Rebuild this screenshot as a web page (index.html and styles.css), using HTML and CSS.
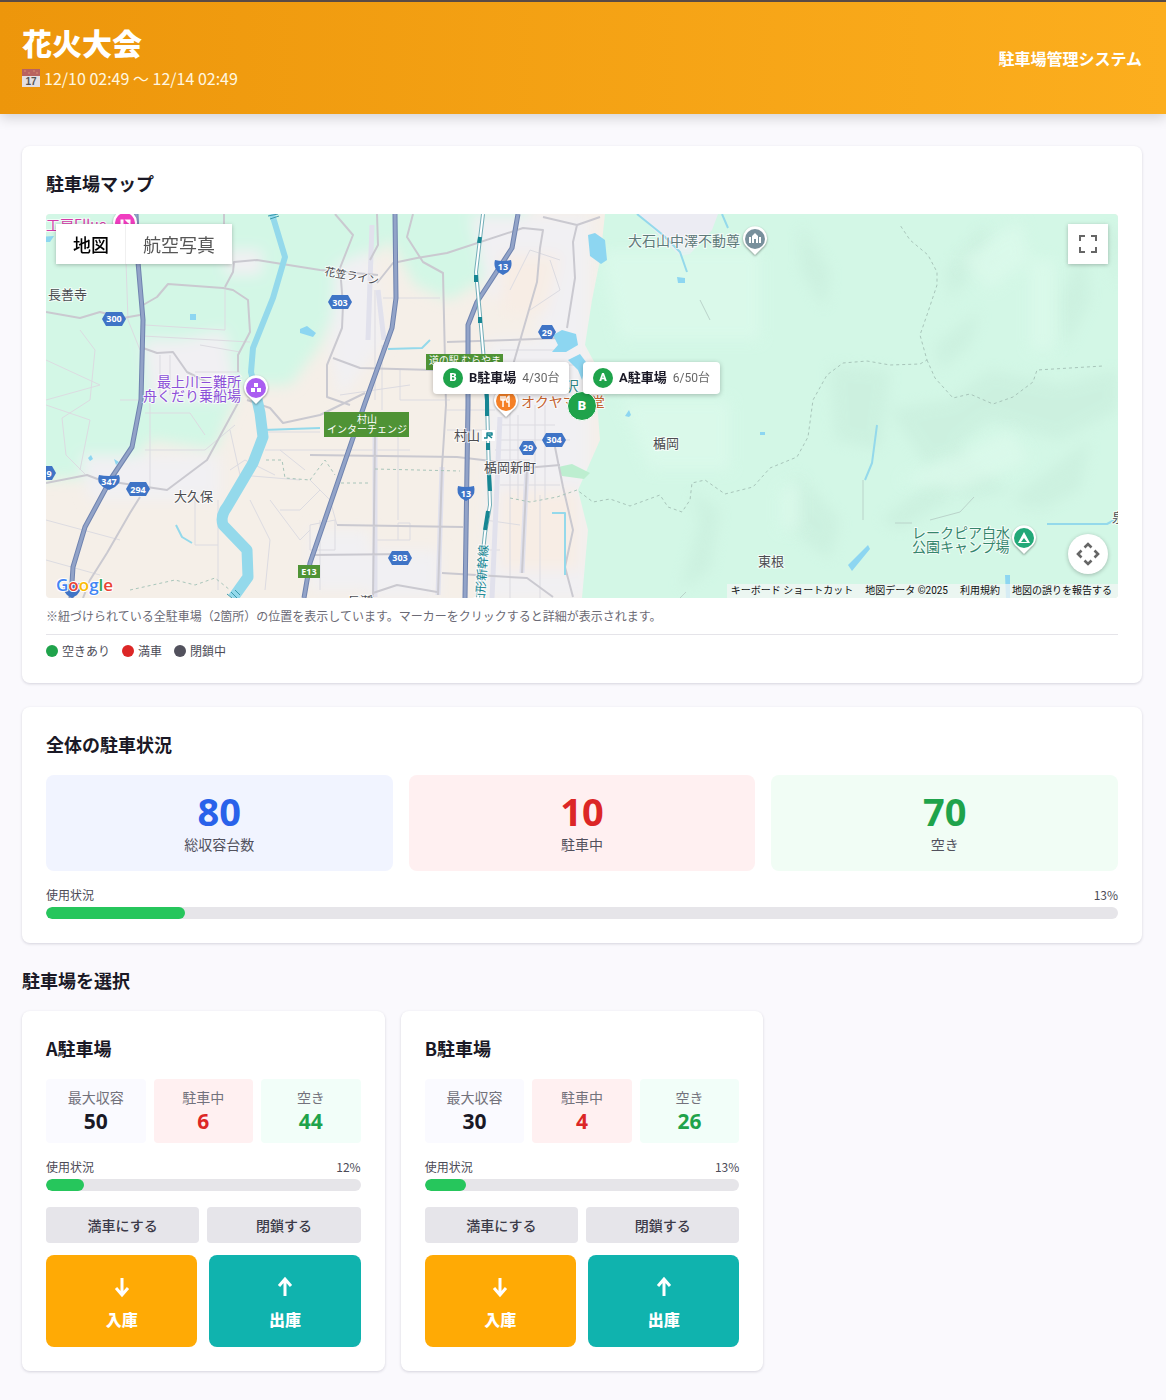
FILE: index.html
```html
<!DOCTYPE html>
<html lang="ja">
<head>
<meta charset="utf-8">
<meta name="viewport" content="width=device-width, initial-scale=1">
<title>花火大会 - 駐車場管理システム</title>
<link rel="stylesheet" href="styles.css">
</head>
<body>
<header class="site-header">
  <div>
    <h1 class="event-title">花火大会</h1>
    <p class="event-period">
      <svg class="calendar-icon" viewBox="0 0 18 18" aria-hidden="true">
        <rect width="18" height="18" fill="#e4dfe2"/><rect width="18" height="7" fill="#b9625f"/>
        <path d="M2 2h2M6 4h2M11 2h2M14 4h2" stroke="#d58f70" stroke-width="1"/>
        <text x="9" y="16" text-anchor="middle" class="calendar-day">17</text>
      </svg>
      <span>12/10 02:49 〜 12/14 02:49</span>
    </p>
  </div>
  <p class="system-name">駐車場管理システム</p>
</header>

<main class="page">
  <section class="card">
    <h2 class="heading">駐車場マップ</h2>
    <div class="map">
      <svg class="map-canvas" viewBox="46 214 1072 384" preserveAspectRatio="xMidYMid slice" role="img" aria-label="駐車場周辺の地図">
        <defs>
          <filter id="soft" x="-20%" y="-20%" width="140%" height="140%"><feGaussianBlur stdDeviation="7"/></filter>
          <path id="pref" d="M-12 0L-8-7H8L12 0L8 7H-8Z"/>
          <path id="natl" d="M-8-7Q0-5 8-7Q10 0 5 5L0 8L-5 5Q-10 0-8-7Z"/>
          <path id="pin" d="M0 16L-7 9A12 12 0 1 1 7 9Z"/>
        </defs>
        <rect x="46" y="214" width="1072" height="384" fill="#f5efe8"/>
        <g filter="url(#soft)">
          <path fill="#d3f7e6" d="M20 190H535L505 265L450 300L415 285L390 240L350 275L320 345L290 385H240L215 450L150 440L130 470L95 478L20 480Z"/>
          <path fill="#f1f0f3" d="M143 340H180L225 330L235 380L225 400H150ZM225 250H262V275H225ZM470 215H590V340H540L530 290L490 300ZM488 340H590V600H485ZM335 265L370 250L385 340L340 400L330 350ZM80 455H220V500H90ZM310 530H370V590H310ZM370 550H440V598H370Z"/>
          <path fill="#f7ede5" d="M500 255H560L545 315H500ZM500 490H580V570H500Z"/>
        </g>
        <path fill="#d3f7e6" d="M605 214H1118V598H582L588 530L578 490L600 440L597 402L605 382L585 345L592 300L600 260Z"/>
        <path fill="#ececf3" d="M638 214H718L712 230L690 254L680 256L662 238Z"/>
        <path fill="#bdeed0" d="M558 467L572 464L590 473L584 479L562 476Z"/>
        <g filter="url(#soft)" fill="#c3e8d7" opacity=".4">
          <path d="M945 270L985 225L990 250L950 300ZM935 345L980 310L970 345L940 370ZM1060 300L1085 240L1090 300L1065 350ZM1100 230H1118V290ZM830 365L890 370L880 450L835 440ZM680 590L700 520L690 490L720 510L710 570ZM795 470L840 520L830 560L790 530ZM890 410L950 400L990 370L1060 385L1118 370V410L1060 440L990 420L930 470ZM880 520L960 460L950 500L900 530ZM800 225L830 270L825 310L800 270ZM1010 500L1090 440L1080 490L1040 510ZM930 400L970 460L1010 490L960 500Z"/>
        </g>
        <g filter="url(#soft)" fill="#ddfaec" opacity=".7">
          <path d="M960 260L1020 220L1030 260L990 290ZM600 250H760V340H620ZM1030 260H1055V350H1030ZM900 480L1010 430L1030 460L960 490ZM780 490L800 480V530H780ZM620 400H730V470H650Z"/>
        </g>

        <g class="lane">
          <path d="M126 262L128 320L140 350M46 360L100 385L46 400M46 405L90 420L80 470M80 330L95 350L90 400L62 418L66 455L85 474M46 520L120 540M46 560L100 575M145 450H205L235 425M145 413H190L205 435M145 325L225 330V290M143 336L250 342M160 355V395M170 355V395M195 372H240M200 345L240 352M230 430L240 475L300 480M265 432H320M265 450H410M320 520V590M335 520V550H310V525ZM310 480L330 500L337 525M398 430V520M375 540H410V523H398V540M383 298H440M375 290V400M382 345V410M340 395L410 385M400 370V400H450M447 410H495M447 430H490M500 350H560M500 365H585M500 425H555M500 440H570M500 485H560M510 400V600M518 415V500M535 405V500M545 405V500M495 450H530M498 460H530M540 495V600M480 550H500M485 520L520 525M510 290L530 250L560 260M530 310L560 290L550 260M230 470L245 460L275 475M280 450L305 470M270 500L300 540L310 530M195 500V545H218M218 500V590M120 400H140M150 390V490M250 500L270 540L265 590M280 510H300L320 490"/>
        </g>
        <g class="road-case"><path d="M375 437V597M442 467L438 595M527 467L522 573M500 417L492 598M378 290L384 340M372 225L368 340"/></g>
        <g class="road">
          <path d="M46 312L80 318L100 312L123 318L140 315M143 305L157 297L168 284L223 288L233 290L248 300L250 332L238 355V372M143 348L157 353L173 352L187 372L207 382M225 287L233 272L234 262L257 260L320 270L378 275M46 483L87 475L100 480L167 490L207 460L238 403M140 497L130 513L107 553L90 580L83 598M247 400L270 408L283 423L320 415L365 393"/>
          <path d="M335 214L353 235L340 268L343 305L342 328L327 365V397L350 405M377 283L393 263L417 258L447 253L523 228L543 230L540 248L537 282L513 365M413 214L407 237L423 262L443 273L446 405L442 467L438 595M543 217L577 225L600 217M577 225L573 242L575 278L567 328M447 342L510 340L560 338M333 358L360 368L433 370L495 368"/>
          <path d="M375 437L373 597M310 455L457 457L500 462M337 525L463 527M373 593L397 585L437 592M442 573L527 578L553 597M555 447L563 487L573 530L565 567L573 597M527 467L522 573M310 555L410 554M560 465L525 468M377 214L378 245L370 260M224 214V260"/>
        </g>
        <g class="water">
          <path d="M637 214L663 235L680 252L687 272M722 214L728 228M877 425L872 463L865 480M1047 524L1107 524L1118 518M552 513H565V575M388 349L422 348L430 340M176 525L182 537L192 543M263 430L320 428"/>
          <path class="river-thin" d="M272 214L285 257L273 298L253 348L251 372L258 400"/>
          <path class="river" d="M256 395L260 413L263 437L253 463L227 507Q220 516 223 525L247 550L248 577L233 598"/>
          <path class="pond" d="M588 235L595 233L605 240L607 260L601 264L590 256ZM553 335L562 330L576 334L578 345L566 352H552L558 345ZM568 360L580 354L586 362L582 380L578 370ZM300 329L307 326L316 333L313 337L300 333ZM677 277L685 278V283H678ZM190 314H196V320H190ZM848 565L868 545L870 549L852 571ZM1005 575H1010V598H1006ZM625 416L629 410L631 415L629 417ZM760 432H765V435H760ZM35 237L54 236L50 242H36ZM114 459L119 462L116 465ZM88 458L91 455L93 459L90 461Z"/>
        </g>
        <g class="border">
          <path d="M510 498L530 502L557 497L577 490L593 502L610 499L630 506L660 495L668 507L682 512L690 500L692 483L705 480L725 494L753 487L770 468L797 457L808 437L813 400L827 375L843 363L867 361L890 365L920 364L927 360L920 335L928 312L937 285V272L928 255L910 240L900 225M927 360L935 378L953 398L970 394L993 404L1013 397L1033 382L1037 370L1103 366M130 590L175 580L195 585L215 578L230 590M375 469L460 471M310 480L325 460L335 475M335 483H370M266 460H282L285 478L310 480"/>
        </g>
        <g class="lane dim"><path d="M700 300L710 320M680 598L686 592M863 480V520M930 520L960 512L974 497M895 523H912"/></g>

        <path class="hwy-case" d="M136 214L138 262L143 320L141 400L132 447L112 477L85 527L73 567L71 598M395 214L396 298L392 328L365 403L310 563L304 598M518 214L512 248L477 302L468 325V405L465 598"/>
        <path class="hwy" d="M136 214L138 262L143 320L141 400L132 447L112 477L85 527L73 567L71 598M395 214L396 298L392 328L365 403L310 563L304 598M518 214L512 248L477 302L468 325V405L465 598"/>
        <path class="rail-case" d="M483 214L476 272L480 315L485 372L487 400L489 477L490 505L485 533L478 598"/>
        <path class="rail-bed" d="M483 214L476 272L480 315L485 372L487 400L489 477L490 505L485 533L478 598"/>
        <path class="rail" d="M480 237L479 243M476 275V282M480 317V323"/>
        <path class="rail" d="M485 372L487 400L487 416M488 443V450M489 473L490 491M488 511L485 530"/>
        <path d="M268 216L278 214M270 219L279 216M227 594L232 598M231 592L237 598M235 590L240 595" stroke="#3a9aac" stroke-width="1"/>

        <g fill="#3f74c6">
          <use href="#pref" x="114" y="319"/><use href="#pref" x="340" y="302"/><use href="#pref" x="554" y="440"/><use href="#pref" x="138" y="489"/><use href="#pref" x="400" y="558"/><use href="#pref" x="44" y="473"/>
          <path d="M538 332L542 325H552L556 332L552 339H542ZM519 448L523 441H533L537 448L533 455H523Z"/>
          <use href="#natl" x="503" y="267"/><use href="#natl" x="466" y="493"/><use href="#natl" x="72" y="590"/>
          <path d="M99 475Q109 477 119 475Q122 482 115 487L109 490L103 487Q96 482 99 475Z"/>
        </g>
        <g class="route">
          <text x="114" y="322">300</text><text x="340" y="306">303</text><text x="547" y="336">29</text><text x="554" y="443">304</text><text x="528" y="451">29</text><text x="138" y="493">294</text><text x="400" y="561">303</text><text x="49" y="477">9</text><text x="503" y="270">13</text><text x="466" y="497">13</text><text x="109" y="485">347</text>
        </g>
        <g fill="#4f9335"><path d="M426 354H503V370H426ZM324 412H409V437H324ZM298 565H320V578H298Z"/></g>
        <g class="route"><text x="309" y="575">E13</text></g>
        <g class="sign"><text x="465" y="364">道の駅 むらやま</text><text x="367" y="423">村山</text><text x="367" y="433">インターチェンジ</text></g>

        <g class="place">
          <text x="48" y="299">長善寺</text><text x="174" y="501">大久保</text><text x="653" y="448">楯岡</text><text x="758" y="566">東根</text><text x="484" y="472">楯岡新町</text><text x="454" y="440">村山</text><text x="347" y="606">長瀞</text><text x="1112" y="522">泉</text>
          <text class="road-name" transform="translate(324 275) rotate(10)">花笠ライン</text>
        </g>
        <rect x="482" y="430" width="13" height="11" fill="#fff"/>
        <path d="M484 438H487V433H492V435H488L492 438" fill="none" stroke="#178693" stroke-width="1.5"/>
        <g class="poi">
          <text x="46" y="230" fill="#d439a8">工房Ellue</text>
          <text x="628" y="246" fill="#5f7a7a">大石山中澤不動尊</text>
          <text x="157" y="387" fill="#8b4fd8">最上川三難所</text><text x="143" y="401" fill="#8b4fd8">舟くだり乗船場</text>
          <text x="521" y="407" fill="#c4612d">オクヤマ食堂</text>
          <text x="565" y="391" fill="#2f8585">沢</text>
          <text x="912" y="538" fill="#35856c">レークピア白水</text><text x="912" y="552" fill="#35856c">公園キャンプ場</text>
          <text class="rail-name" transform="translate(484 605) rotate(-86)">山形新幹線</text>
        </g>
        <g fill="#fff" class="pins"><use href="#pin" x="125" y="223"/><use href="#pin" x="755" y="239"/><use href="#pin" x="256" y="388"/><use href="#pin" x="506" y="401"/><use href="#pin" x="1024" y="538"/></g>
        <circle cx="125" cy="223" r="10" fill="#f03dc0"/><path d="M120 219H131V229H120ZM124 219V224H129" fill="#fff" stroke="#f03dc0"/>
        <circle cx="755" cy="239" r="10" fill="#78909c"/><path d="M749 243V237H751V243M752 243V236L755 233L758 236V243H756V239H754V243ZM759 243V237H761V243Z" fill="#fff"/>
        <circle cx="256" cy="388" r="10" fill="#aa5df1"/><path d="M254 383H258V387H254ZM251 388H255V392H251ZM257 388H261V392H257Z" fill="#fff"/>
        <circle cx="506" cy="401" r="10" fill="#f58026"/><path d="M501 396V400H505V396M503 396V407M509 407V396Q506 398 507 402H509" fill="none" stroke="#fff" stroke-width="1.5"/>
        <circle cx="1024" cy="538" r="10" fill="#23a878"/><path d="M1024 532L1030 543H1018Z" fill="#fff"/><path d="M1024 538L1027 542H1021Z" fill="#23a878"/>
      </svg>

      <div class="map-types">
        <button type="button" class="map-type is-active">地図</button>
        <button type="button" class="map-type">航空写真</button>
      </div>
      <button type="button" class="map-button fullscreen" aria-label="全画面表示">
        <svg width="18" height="18" viewBox="0 0 18 18"><path d="M1 6V1H6M12 1H17V6M17 12V17H12M6 17H1V12" fill="none" stroke="#666" stroke-width="2"/></svg>
      </button>
      <button type="button" class="map-button camera" aria-label="地図のカメラ コントロール">
        <svg width="24" height="24" viewBox="0 0 24 24"><path d="M8.500 5.500L12 2L15.500 5.500M18.500 8.500L22 12L18.500 15.500M15.500 18.500L12 22L8.500 18.500M5.500 15.500L2 12L5.500 8.500" fill="none" stroke="#666" stroke-width="2.600"/></svg>
      </button>

      <span class="lot-pin">B</span>
      <button type="button" class="lot-label lot-label-b"><span class="lot-badge">B</span><b>B駐車場</b><span class="lot-count">4/30台</span></button>
      <button type="button" class="lot-label lot-label-a"><span class="lot-badge">A</span><b>A駐車場</b><span class="lot-count">6/50台</span></button>

      <a class="map-logo" href="#" aria-label="Google"><svg width="68" height="24" viewBox="0 0 68 24"><text x="2" y="17" class="logo-text"><tspan fill="#4285f4">G</tspan><tspan fill="#ea4335">o</tspan><tspan fill="#fbbc04">o</tspan><tspan fill="#4285f4">g</tspan><tspan fill="#34a853">l</tspan><tspan fill="#ea4335">e</tspan></text></svg></a>
      <div class="map-credits"><button type="button">キーボード ショートカット</button><span>地図データ ©2025</span><a href="#">利用規約</a><a href="#">地図の誤りを報告する</a></div>
    </div>
    <p class="map-note">※紐づけられている全駐車場（2箇所）の位置を表示しています。マーカーをクリックすると詳細が表示されます。</p>
    <ul class="legend">
      <li><span class="dot dot-open"></span>空きあり</li>
      <li><span class="dot dot-full"></span>満車</li>
      <li><span class="dot dot-closed"></span>閉鎖中</li>
    </ul>
  </section>

  <section class="card">
    <h2 class="heading">全体の駐車状況</h2>
    <div class="totals">
      <div class="total total-blue"><strong>80</strong><span>総収容台数</span></div>
      <div class="total total-red"><strong>10</strong><span>駐車中</span></div>
      <div class="total total-green"><strong>70</strong><span>空き</span></div>
    </div>
    <div class="usage"><span>使用状況</span><span>13%</span></div>
    <div class="bar" role="progressbar" aria-label="使用状況" aria-valuenow="13"><div class="bar-fill" style="width:13%"></div></div>
  </section>

  <section>
    <h2 class="heading">駐車場を選択</h2>
    <div class="lots">
      <article class="card">
        <h3 class="heading">A駐車場</h3>
        <div class="stats">
          <div class="stat"><span>最大収容</span><strong>50</strong></div>
          <div class="stat stat-red"><span>駐車中</span><strong>6</strong></div>
          <div class="stat stat-green"><span>空き</span><strong>44</strong></div>
        </div>
        <div class="usage"><span>使用状況</span><span>12%</span></div>
        <div class="bar" role="progressbar" aria-label="A駐車場の使用状況" aria-valuenow="12"><div class="bar-fill" style="width:12%"></div></div>
        <div class="state-actions"><button type="button">満車にする</button><button type="button">閉鎖する</button></div>
        <div class="gate-actions">
          <button type="button" class="gate-in"><svg viewBox="0 0 24 32"><path d="M12 7V23M6 17L12 24L18 17"/></svg><span>入庫</span></button>
          <button type="button" class="gate-out"><svg viewBox="0 0 24 32"><path d="M12 25V9M6 15L12 8L18 15"/></svg><span>出庫</span></button>
        </div>
      </article>
      <article class="card">
        <h3 class="heading">B駐車場</h3>
        <div class="stats">
          <div class="stat"><span>最大収容</span><strong>30</strong></div>
          <div class="stat stat-red"><span>駐車中</span><strong>4</strong></div>
          <div class="stat stat-green"><span>空き</span><strong>26</strong></div>
        </div>
        <div class="usage"><span>使用状況</span><span>13%</span></div>
        <div class="bar" role="progressbar" aria-label="B駐車場の使用状況" aria-valuenow="13"><div class="bar-fill" style="width:13%"></div></div>
        <div class="state-actions"><button type="button">満車にする</button><button type="button">閉鎖する</button></div>
        <div class="gate-actions">
          <button type="button" class="gate-in"><svg viewBox="0 0 24 32"><path d="M12 7V23M6 17L12 24L18 17"/></svg><span>入庫</span></button>
          <button type="button" class="gate-out"><svg viewBox="0 0 24 32"><path d="M12 25V9M6 15L12 8L18 15"/></svg><span>出庫</span></button>
        </div>
      </article>
    </div>
  </section>
</main>
</body>
</html>
```
FILE: styles.css
```css
* { box-sizing: border-box; }
body, h1, h2, h3, p, ul { margin: 0; padding: 0; }
body {
  background: #faf9fd;
  color: #1a1926;
  font-family: "Noto Sans CJK JP", "Noto Sans", sans-serif;
  font-size: 16px;
  line-height: 24px;
}
button { border: 0; padding: 0; font: inherit; color: inherit; background: none; cursor: pointer; }
a { color: inherit; text-decoration: none; }

/* Header */
.site-header {
  display: flex;
  justify-content: space-between;
  align-items: center;
  padding: 24px 24px 24px 22px;
  border-top: 2px solid #594a45;
  background: linear-gradient(90deg, #ed960b, #fcae1e);
  box-shadow: 0 4px 12px rgba(0, 0, 0, .16);
  color: #fff;
}
.event-title { font-size: 30px; line-height: 32px; margin-bottom: 8px; font-weight: 900; }
.event-period { display: flex; align-items: center; gap: 4px; color: #fff7e0; }
.calendar-icon { width: 18px; height: 18px; }
.calendar-day { font: bold 10px "Liberation Sans", sans-serif; fill: #555; }
.system-name { font-weight: 700; }

/* Page and cards */
.page { display: flex; flex-direction: column; gap: 24px; padding: 32px 24px 29px 22px; }
.card {
  min-width: 0;
  padding: 24px;
  border-radius: 8px;
  background: #fff;
  box-shadow: 0 1px 3px rgba(20, 20, 50, .16);
}
.heading { font-size: 18px; line-height: 26px; margin-bottom: 18px; font-weight: 700; }

/* Map */
.map { position: relative; height: 384px; overflow: hidden; border-radius: 4px; }
.map-canvas { display: block; width: 100%; height: 100%; }
.map-canvas path { stroke-linejoin: round; }
.lane, .road, .road-case, .border, .hwy, .hwy-case, .rail, .rail-bed, .rail-case { fill: none; }
.lane { stroke: #dcdbe1; stroke-width: 1; }
.dim { stroke: #bad3ca; }
.road { stroke: #cac9d0; stroke-width: 2; }
.road-case { stroke: #e1e1ec; stroke-width: 5; }
.border { stroke: #a8c5ba; stroke-width: 1; stroke-dasharray: 3 3; }
.water { fill: none; stroke: #94d9eb; stroke-width: 2; }
.river-thin { stroke-width: 6; }
.river { stroke-width: 11; }
.pond { fill: #8dd6f1; stroke: none; }
.hwy-case { stroke: #6f83af; stroke-width: 5; }
.hwy { stroke: #92a3c8; stroke-width: 3; }
.rail-case { stroke: #72aeb8; stroke-width: 4; }
.rail-bed { stroke: #fff; stroke-width: 2; }
.rail { stroke: #178693; stroke-width: 4; }
.route { font: bold 9px "Open Sans", sans-serif; fill: #fff; text-anchor: middle; }
.sign { font-size: 10px; fill: #fff; text-anchor: middle; }
.place { font-size: 13px; fill: #4c4c50; stroke: #fff; stroke-width: 2px; stroke-opacity: .7; paint-order: stroke; }
.road-name { font-size: 11px; }
.poi { font-size: 14px; stroke: #fff; stroke-width: 2px; stroke-opacity: .7; paint-order: stroke; }
.rail-name { font-size: 12px; fill: #178693; }
.pins { filter: drop-shadow(0 1px 1px rgba(0, 0, 0, .4)); }

.map-types { position: absolute; left: 10px; top: 10px; display: flex; background: #fff; box-shadow: 0 1px 4px rgba(0, 0, 0, .25); }
.map-type { height: 40px; padding: 0 17px; font-size: 18px; color: #565656; }
.map-type.is-active { padding-right: 16px; color: #000; font-weight: 500; border-right: 1px solid #f0f0f0; }
.map-button {
  position: absolute;
  right: 10px;
  display: grid;
  place-items: center;
  width: 40px;
  height: 40px;
  background: #fff;
  box-shadow: 0 1px 4px rgba(0, 0, 0, .25);
}
.fullscreen { top: 10px; }
.camera { bottom: 24px; border-radius: 50%; }
.lot-label {
  position: absolute;
  top: 148px;
  left: 50%;
  display: flex;
  align-items: center;
  gap: 6px;
  height: 32px;
  padding: 0 10px;
  border-radius: 4px;
  background: #fff;
  box-shadow: 0 1px 5px rgba(0, 0, 0, .25);
  font-family: Roboto, "Noto Sans CJK JP", sans-serif;
  font-size: 13px;
  line-height: 20px;
  white-space: nowrap;
}
.lot-label-b { margin-left: -149px; }
.lot-label-a { margin-left: 1px; }
.lot-badge, .lot-pin {
  display: grid;
  place-items: center;
  border-radius: 50%;
  background: #1fa34b;
  color: #fff;
  font-family: Roboto, sans-serif;
  font-weight: 900;
}
.lot-badge { width: 20px; height: 20px; font-size: 11px; }
.lot-pin {
  position: absolute;
  left: 50%;
  top: 50%;
  width: 30px;
  height: 30px;
  margin: -15px;
  border: 1px solid #fff;
  font-size: 13px;
}
.lot-count { font-size: 12px; color: #666; }
.map-logo { position: absolute; left: 8px; bottom: 0; height: 24px; }
.logo-text { font: 600 17px "Open Sans", sans-serif; stroke: #fff; stroke-width: 2px; paint-order: stroke; }
.map-credits {
  position: absolute;
  right: 0;
  bottom: 0;
  display: flex;
  gap: 12px;
  padding: 0 6px 0 4px;
  background: rgba(245, 245, 245, .7);
  color: #111;
  font-family: Roboto, "Noto Sans CJK JP", sans-serif;
  font-size: 10px;
  line-height: 14px;
}
.map-note { margin-top: 8px; font-size: 12px; line-height: 20px; color: #6b6a75; }
.legend {
  display: flex;
  gap: 12px;
  margin-top: 8px;
  padding-top: 8px;
  border-top: 1px solid #e5e4e9;
  list-style: none;
  font-size: 12px;
  line-height: 16px;
  color: #4c4b57;
}
.legend li { display: flex; align-items: center; gap: 4px; }
.dot { width: 12px; height: 12px; border-radius: 50%; }
.dot-open { background: #1fa34b; }
.dot-full { background: #dc2626; }
.dot-closed { background: #52515d; }

/* Totals */
.totals { display: grid; grid-template-columns: repeat(3, 1fr); gap: 16px; }
.total { display: flex; flex-direction: column; align-items: center; padding: 16px; border-radius: 8px; }
.total strong { font-family: "Noto Sans", sans-serif; font-size: 38px; line-height: 40px; margin-bottom: 2px; }
.total span { font-size: 14px; line-height: 22px; color: #52515d; }
.total-blue { background: #f1f4ff; }
.total-blue strong { color: #2962ea; }
.total-red { background: #fff0f1; }
.total-red strong, .stat-red strong { color: #dc2626; }
.total-green { background: #f1fdf5; }
.total-green strong, .stat-green strong { color: #1fa34b; }

.usage { display: flex; justify-content: space-between; margin: 16px 0 4px; font-size: 12px; line-height: 16px; color: #4c4b57; }
.bar { height: 12px; border-radius: 6px; background: #e6e5e9; overflow: hidden; }
.bar-fill { height: 100%; border-radius: 6px; background: #26c65c; }

/* Parking lots */
.lots { display: grid; grid-template-columns: repeat(3, 1fr); gap: 16px; }
.stats { display: grid; grid-template-columns: repeat(3, 1fr); gap: 8px; }
.stat { display: flex; flex-direction: column; align-items: center; padding: 8px 4px; border-radius: 4px; background: #fafaff; }
.stat span { font-size: 14px; line-height: 20px; color: #73727c; }
.stat strong { font-family: "Noto Sans", sans-serif; font-size: 21px; line-height: 28px; }
.stat-red { background: #fff0f1; }
.stat-green { background: #f2fef9; }
.state-actions { display: grid; grid-template-columns: 1fr 1fr; gap: 8px; margin: 16px 0 12px; }
.state-actions button {
  height: 36px;
  border-radius: 4px;
  background: #e6e5ea;
  color: #3c3b49;
  font-size: 14px;
  line-height: 20px;
  font-weight: 500;
}
.gate-actions { display: grid; grid-template-columns: 1fr 1fr; gap: 12px; }
.gate-actions button {
  display: flex;
  flex-direction: column;
  align-items: center;
  gap: 4px;
  padding: 16px;
  border-radius: 8px;
  color: #fff;
  font-weight: 900;
}
.gate-actions svg { width: 24px; height: 32px; fill: none; stroke: #fff; stroke-width: 3; }
.gate-actions .gate-in { background: #ffaa05; }
.gate-actions .gate-out { background: #10b3ae; }
```
